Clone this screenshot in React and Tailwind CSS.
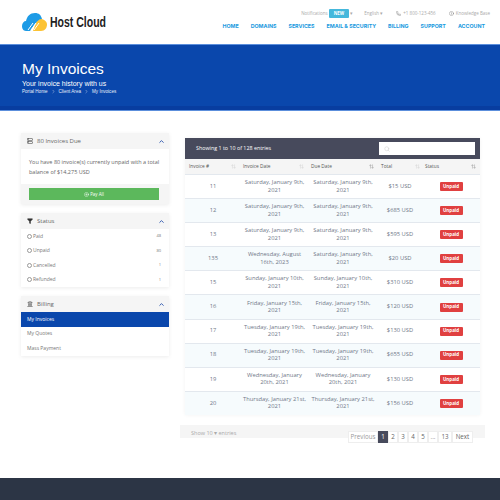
import React from 'react';
import { ChevronUp, ChevronRight, Phone, Info, Search, Filter, Landmark, Server, ArrowUpDown, CirclePlus } from 'lucide-react';

const topNav = ['HOME', 'DOMAINS', 'SERVICES', 'EMAIL & SECURITY', 'BILLING', 'SUPPORT', 'ACCOUNT'];

const invoices = [
  { id: '11', date: 'Saturday, January 9th, 2021', due: 'Saturday, January 9th, 2021', total: '$15 USD' },
  { id: '12', date: 'Saturday, January 9th, 2021', due: 'Saturday, January 9th, 2021', total: '$685 USD' },
  { id: '13', date: 'Saturday, January 9th, 2021', due: 'Saturday, January 9th, 2021', total: '$595 USD' },
  { id: '135', date: 'Wednesday, August 16th, 2023', due: 'Saturday, January 9th, 2021', total: '$20 USD' },
  { id: '15', date: 'Sunday, January 10th, 2021', due: 'Sunday, January 10th, 2021', total: '$310 USD' },
  { id: '16', date: 'Friday, January 15th, 2021', due: 'Friday, January 15th, 2021', total: '$120 USD' },
  { id: '17', date: 'Tuesday, January 19th, 2021', due: 'Tuesday, January 19th, 2021', total: '$130 USD' },
  { id: '18', date: 'Tuesday, January 19th, 2021', due: 'Tuesday, January 19th, 2021', total: '$655 USD' },
  { id: '19', date: 'Wednesday, January 20th, 2021', due: 'Wednesday, January 20th, 2021', total: '$130 USD' },
  { id: '20', date: 'Thursday, January 21st, 2021', due: 'Thursday, January 21st, 2021', total: '$156 USD' },
];

const statuses = [
  { label: 'Paid', count: '48' },
  { label: 'Unpaid', count: '80' },
  { label: 'Cancelled', count: '1' },
  { label: 'Refunded', count: '1' },
];

const Logo = () => (
  <svg width="25" height="18" viewBox="0 0 25 18">
    <path d="M15 7c3-2 9-1 10 4 0 4-2 7-6 7h-8z" fill="#fcc335" />
    <path d="M4 18C1 18 0 15 0 13c0-3 2-5 4-5 1-5 4-8 9-8 4 0 6 2 7 6-3 0-5 2-7 5l-5 7z" fill="#1d9be6" />
    <path d="M6 17l5-7M9 17l5-7M12 17l5-7" stroke="#fff" strokeWidth="1" />
  </svg>
);

const PanelHead = ({ icon, title }) => (
  <div className="flex h-[16px] items-center justify-between bg-[#f5f5f5] pl-[6px] pr-[4px] text-[6px] text-[#666]">
    <div className="flex items-center gap-[4px]">
      {icon}
      <span>{title}</span>
    </div>
    <ChevronUp size={7} strokeWidth={3} className="text-[#1e4aa8]" />
  </div>
);

export default function App() {
  return (
    <div className="h-[500px] w-[500px] overflow-hidden bg-white font-['Open_Sans',sans-serif]">
      <header className="flex h-[44px] justify-between pl-[22px] pr-[10px]">
        <div className="flex items-center gap-[3px]">
          <Logo />
          <span className="origin-left scale-x-[0.7] font-['Liberation_Sans',sans-serif] text-[15px] font-bold text-[#222]">Host Cloud</span>
        </div>
        <div className="flex flex-col items-end pt-[9px]">
          <div className="flex h-[9px] items-center text-[4.5px] text-[#aaa]">
            <span>Notifications</span>
            <span className="mx-[1px] rounded-[1px] bg-[#45b8dc] px-[5px] py-[1px] text-[4.5px] font-bold text-white">NEW</span>
            <span>▾</span>
            <span className="ml-[11px]">English ▾</span>
            <Phone size={5} className="ml-[13px] mr-[2px] text-[#777]" />
            <span>+1 800-123-456</span>
            <Info size={5} className="ml-[13px] mr-[2px] text-[#777]" />
            <span>Knowledge Base</span>
          </div>
          <nav className="mr-[5px] mt-[5px] flex gap-[12px] font-['Inter',sans-serif] text-[5.3px] font-bold text-[#1a9ae0]">
            {topNav.map((item) => (
              <span key={item}>{item}</span>
            ))}
          </nav>
        </div>
      </header>

      <section className="h-[67px] border-y border-y-[#5c8fdc] bg-[#0a47ac] text-white">
        <div className="h-[61px] pl-[22px] pt-[14px] font-['Liberation_Sans',sans-serif]">
          <h1 className="text-[15.5px] leading-[20px]">My Invoices</h1>
          <p className="text-[7px] leading-[9px]">Your invoice history with us</p>
          <div className="flex items-center gap-[3px] text-[4.6px] leading-[7px] text-[#e6eefa]">
            <span>Portal Home</span>
            <ChevronRight size={5} />
            <span>Client Area</span>
            <ChevronRight size={5} />
            <span>My Invoices</span>
          </div>
        </div>
        <div className="h-[4px] bg-[#083da0]" />
      </section>

      <main className="flex items-start pl-[21px] pr-[15px] pt-[22px]">
        <aside className="flex w-[148px] flex-col gap-[9px]">
          <div className="bg-white shadow-[0_1px_4px_rgba(0,0,0,0.08)]">
            <PanelHead icon={<Server size={6} className="text-[#333]" />} title="80 Invoices Due" />
            <div className="h-[35px] px-[8px] pt-[8px] text-[5.5px] leading-[10px] text-[#666]">
              You have 80 invoice(s) currently unpaid with a total balance of $14,275 USD
            </div>
            <div className="bg-[#f5f5f5] pb-[4px] pl-[8px] pr-[10px] pt-[4px]">
              <div className="flex h-[12px] items-center justify-center gap-[1px] bg-[#5cb85c] text-[4.5px] text-white">
                <CirclePlus size={5} />
                <span>Pay All</span>
              </div>
            </div>
          </div>

          <div className="bg-white shadow-[0_1px_4px_rgba(0,0,0,0.08)]">
            <PanelHead icon={<Filter size={6} fill="#333" className="text-[#333]" />} title="Status" />
            {statuses.map((s) => (
              <div key={s.label} className="flex h-[14.5px] items-center justify-between px-[6px] text-[5px] text-[#777]">
                <div className="flex items-center gap-[1px]">
                  <span className="h-[5px] w-[5px] rounded-full border-[0.5px] border-[#999]" />
                  <span>{s.label}</span>
                </div>
                <span className="pr-[2px] text-[4px]">{s.count}</span>
              </div>
            ))}
          </div>

          <div className="bg-white shadow-[0_1px_4px_rgba(0,0,0,0.08)]">
            <PanelHead icon={<Landmark size={6} className="text-[#333]" />} title="Billing" />
            <div className="flex h-[14.5px] items-center bg-[#0a47ac] px-[6px] text-[5px] text-white">My Invoices</div>
            <div className="flex h-[14.5px] items-center px-[6px] text-[5px] text-[#777]">My Quotes</div>
            <div className="flex h-[14.5px] items-center px-[6px] text-[5px] text-[#777]">Mass Payment</div>
          </div>
        </aside>

        <div className="ml-[11px] flex-1">
          <div className="mx-[5px] mt-[5px] shadow-[0_0_4px_rgba(0,0,0,0.05)]">
            <div className="flex h-[21px] items-center justify-between bg-[#474a5c] pl-[11px] pr-[5px] text-[5.35px] text-white">
              <span>Showing 1 to 10 of 128 entries</span>
              <div className="flex h-[13px] w-[96px] items-center bg-white pl-[5px]">
                <Search size={6} className="text-[#ccc]" />
              </div>
            </div>
            <div className="grid h-[15px] grid-cols-[56px_67px_70px_44px_58px] items-center bg-[#f5f5f5] text-[4.8px] text-[#555]">
              <div className="flex items-center justify-between pl-[4px] pr-[5px]"><span>Invoice #</span><ArrowUpDown size={5} className="text-[#ccc]" /></div>
              <div className="flex items-center justify-between pl-[2px] pr-[4px]"><span>Invoice Date</span><ArrowUpDown size={5} className="text-[#ccc]" /></div>
              <div className="flex items-center justify-between pl-[3px] pr-[4px]"><span>Due Date</span><ArrowUpDown size={5} className="text-[#888]" /></div>
              <div className="flex items-center justify-between pl-[3px] pr-[2px]"><span>Total</span><ArrowUpDown size={5} className="text-[#ccc]" /></div>
              <div className="flex items-center justify-between pl-[3px] pr-[4px]"><span>Status</span><ArrowUpDown size={5} className="text-[#888]" /></div>
            </div>
            {invoices.map((inv, i) => (
              <div
                key={inv.id}
                className={`grid h-[24.1px] grid-cols-[56px_67px_70px_44px_58px] items-center border-t border-t-[#e3e8ee] text-center text-[5.8px] leading-[7.5px] text-[#707888] ${i % 2 === 1 ? 'bg-[#f6fbfd]' : 'bg-white'}`}
              >
                <div>{inv.id}</div>
                <div className="px-[2px]">{inv.date}</div>
                <div className="px-[3px]">{inv.due}</div>
                <div>{inv.total}</div>
                <div className="flex justify-center">
                  <span className="flex h-[9px] w-[23px] items-center justify-center rounded-[1px] bg-[#e04040] text-[4.5px] font-bold text-white">Unpaid</span>
                </div>
              </div>
            ))}
          </div>

          <div className="relative mt-[10px] h-[13px] bg-[#f5f5f5] pl-[11px] pt-[4px] text-[5.5px] leading-[8px] text-[#aaa]">
            Show 10 ▾ entries
            <div className="absolute right-[12px] top-[6px] flex h-[12px] items-stretch text-[6.2px] text-[#666]">
              <span className="flex w-[30px] items-center justify-center border border-[#eee] bg-white text-[#999]">Previous</span>
              <span className="flex w-[10px] items-center justify-center bg-[#474a5c] text-white">1</span>
              <span className="flex w-[10px] items-center justify-center border border-[#eee] bg-white">2</span>
              <span className="flex w-[10px] items-center justify-center border border-[#eee] bg-white">3</span>
              <span className="flex w-[10px] items-center justify-center border border-[#eee] bg-white">4</span>
              <span className="flex w-[10px] items-center justify-center border border-[#eee] bg-white">5</span>
              <span className="flex w-[10px] items-center justify-center border border-[#eee] bg-white text-[#999]">...</span>
              <span className="flex w-[14px] items-center justify-center border border-[#eee] bg-white">13</span>
              <span className="flex w-[21px] items-center justify-center border border-[#eee] bg-white">Next</span>
            </div>
          </div>
        </div>
      </main>

      <footer className="mt-[40px] h-[30px] bg-[#2c3545]" />
    </div>
  );
}
